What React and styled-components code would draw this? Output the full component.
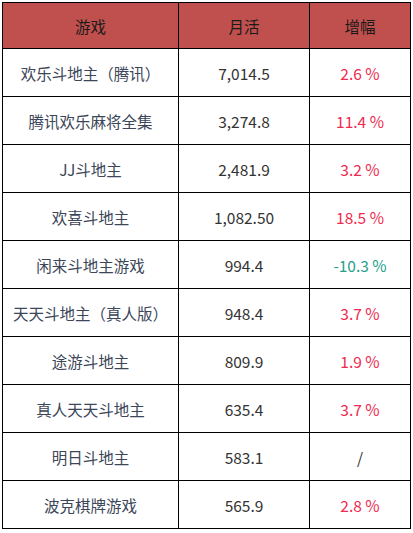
import React from 'react';
import styled, { createGlobalStyle } from 'styled-components';

const GlobalStyle = createGlobalStyle`
  body {
    margin: 0;
    background: #ffffff;
    font-family: "Noto Sans CJK SC", "Noto Sans", sans-serif;
  }
`;

const Wrapper = styled.div`
  padding: 2px 0 0 2px;
`;

const Table = styled.table`
  border-collapse: collapse;
  width: 408px;
  table-layout: fixed;
`;

const HeadCell = styled.th`
  background-color: #c0504d;
  color: #1a1a1a;
  font-weight: normal;
  font-size: 15.5px;
  height: 45px;
  border: 1px solid #000;
  text-align: center;
  padding: 0;
`;

const Cell = styled.td`
  border: 1px solid #000;
  height: 47px;
  text-align: center;
  padding: 0;
  font-size: 15.5px;
  color: ${(p) => p.color || '#333'};
`;

const rows = [
  ['欢乐斗地主（腾讯）', '7,014.5', '2.6 %'],
  ['腾讯欢乐麻将全集', '3,274.8', '11.4 %'],
  ['JJ斗地主', '2,481.9', '3.2 %'],
  ['欢喜斗地主', '1,082.50', '18.5 %'],
  ['闲来斗地主游戏', '994.4', '-10.3 %'],
  ['天天斗地主（真人版）', '948.4', '3.7 %'],
  ['途游斗地主', '809.9', '1.9 %'],
  ['真人天天斗地主', '635.4', '3.7 %'],
  ['明日斗地主', '583.1', '/'],
  ['波克棋牌游戏', '565.9', '2.8 %'],
];

const changeColor = (v) => {
  if (v === '/') return '#333';
  if (v.startsWith('-')) return '#24a08c';
  return '#ef2a4f';
};

const App = () => {
  return (
    <Wrapper>
      <GlobalStyle />
      <Table>
        <colgroup>
          <col style={{ width: 176 }} />
          <col style={{ width: 131 }} />
          <col style={{ width: 101 }} />
        </colgroup>
        <thead>
          <tr>
            <HeadCell>游戏</HeadCell>
            <HeadCell>月活</HeadCell>
            <HeadCell>增幅</HeadCell>
          </tr>
        </thead>
        <tbody>
          {rows.map(([name, mau, change]) => (
            <tr key={name}>
              <Cell color="#3b4658">{name}</Cell>
              <Cell>{mau}</Cell>
              <Cell color={changeColor(change)}>{change}</Cell>
            </tr>
          ))}
        </tbody>
      </Table>
    </Wrapper>
  );
};

export default App;
